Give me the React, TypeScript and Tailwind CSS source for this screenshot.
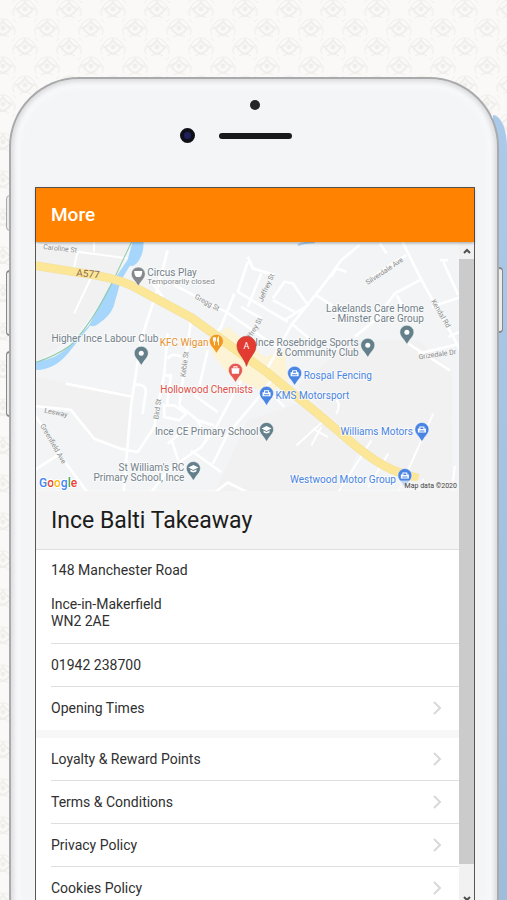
type PinProps = {
  x: number;
  y: number;
  color: string;
  icon?: "dot" | "car" | "cap" | "cup" | "fork" | "bag";
};

type MapLabel = {
  text: string;
  x: number;
  y: number;
  fill: string;
  end?: boolean;
};

const GREY = "#74818a";
const BLUE = "#4a85e3";
const TEAL = "#64808a";

const A577 =
  "M0 76 150 100Q235 112 290 135L470 232 700 398 850 520 960 614Q1040 680 1100 698L1150 714";

const links = [
  "Loyalty & Reward Points",
  "Terms & Conditions",
  "Privacy Policy",
  "Cookies Policy",
];

const labels: MapLabel[] = [
  { text: "Circus Play", x: 147, y: 276, fill: GREY },
  { text: "Higher Ince Labour Club", x: 158, y: 342, fill: GREY, end: true },
  { text: "KFC Wigan", x: 208, y: 346, fill: "#e8912d", end: true },
  { text: "Hollowood Chemists", x: 160, y: 393, fill: "#e04f48" },
  { text: "Lakelands Care Home", x: 423, y: 312, fill: GREY, end: true },
  { text: "- Minster Care Group", x: 423, y: 322, fill: GREY, end: true },
  { text: "Ince Rosebridge Sports", x: 358, y: 346, fill: GREY, end: true },
  { text: "& Community Club", x: 358, y: 356, fill: GREY, end: true },
  { text: "Rospal Fencing", x: 303, y: 379, fill: BLUE },
  { text: "KMS Motorsport", x: 275, y: 399, fill: BLUE },
  { text: "Ince CE Primary School", x: 258, y: 435, fill: GREY, end: true },
  { text: "Williams Motors", x: 412, y: 435, fill: BLUE, end: true },
  { text: "St William's RC", x: 184, y: 470, fill: GREY, end: true },
  { text: "Primary School, Ince", x: 184, y: 480, fill: GREY, end: true },
  { text: "Westwood Motor Group", x: 395, y: 482, fill: BLUE, end: true },
];

const streets = [
  { text: "Caroline St", x: 43, y: 249, angle: 6 },
  { text: "Gregg St", x: 194, y: 298, angle: 29 },
  { text: "Jeffrey St", x: 262, y: 302, angle: -66 },
  { text: "Jeffrey St", x: 247, y: 345, angle: -60 },
  { text: "Silverdale Ave", x: 367, y: 285, angle: -34 },
  { text: "Kendal Rd", x: 430, y: 301, angle: 60 },
  { text: "Grizedale Dr", x: 418, y: 359, angle: -8 },
  { text: "Keble St", x: 185, y: 377, angle: -83 },
  { text: "Bird St", x: 158, y: 419, angle: -82 },
  { text: "Lesway", x: 44, y: 412, angle: 12 },
  { text: "Greenfield Ave", x: 40, y: 425, angle: 60 },
];

// Centre of the pin head sits on x, y
const Pin = ({ x, y, color, icon = "dot" }: PinProps) => (
  <g transform={`translate(${x} ${y})`}>
    <path
      d="M0-7a7 7 0 0 1 7 7c0 3-2 5-4 7.500L0 12-3 7.500C-5 5-7 3-7 0a7 7 0 0 1 7-7Z"
      fill={color}
      stroke="#fff"
      strokeWidth=".5"
    />
    {icon === "dot" && <circle r="2.500" fill="#fff" />}
    {icon === "car" && (
      <path
        d="M-4 3v-4h1.500v-2h5v2H4v4ZM-1.500-2v1.500h3V-2ZM-2.500 1v1h5V1Z"
        fill="#fff"
        fillRule="evenodd"
      />
    )}
    {icon === "cap" && (
      <path d="M-5-1 0-3.500 5-1 0 1.500ZM-3 1l3 1.500L3 1v2L0 4-3 3Z" fill="#fff" />
    )}
    {icon === "cup" && <path d="M-4-3h8c0 3-1 6-3 6h-2c-2 0-3-3-3-6Z" fill="#fff" />}
    {icon === "fork" && (
      <path
        d="M-3-4v3q0 1 1 1v4M-1-4v3q0 1-1 1M-2-4v3M2 4v-8q-1 1-1 4h1"
        fill="none"
        stroke="#fff"
      />
    )}
    {icon === "bag" && (
      <path
        d="M-4-2h2v-2h4v2h2l-.500 5.500h-7ZM-1-2h2v-1h-2Z"
        fill="#fff"
        fillRule="evenodd"
      />
    )}
  </g>
);

const StreetMap = () => (
  <svg
    viewBox="36 242 422 248"
    className="block w-full h-auto font-['Roboto',sans-serif]"
    role="img"
    aria-label="Map of Ince-in-Makerfield"
  >
    <rect x="36" y="242" width="422" height="248" fill="#f2f4f5" />

    {/* Ground, roads and canal are drawn at three times the map's scale */}
    <g transform="translate(34 240) scale(.3333)" fill="none" strokeLinejoin="round">
      <path
        d="M0 0h290L240 130 130 280 0 370ZM0 410l290 50-10 160-80-10-90-100L0 500ZM640 540l180-60 150 150-50 126H540ZM950 300h200l100 90v366h-80l-200-150-180-170Z"
        fill="#f1f1f1"
      />
      <path d="m520 300 60-40 110 90 60-20 10 90-60 40-110-50-50-60Z" fill="#fdf3d5" />

      <g stroke="#fff" strokeWidth="8">
        <path d="M0 10 130 35 280 55M130 35 120 85M180 5v30M172 110 120 220" strokeWidth="6" />
        <path d="M400 30 375 130 320 300 290 500 268 756M355 130 385 170M95 430 290 468M300 432q35 0 35 20L325 520M0 497 110 508 180 595 260 625 310 635 360 560 390 400 400 280" />
        <path d="M400 355q15-20 40-5M385 405h25l-12 90M470 240 435 495M385 495h35l35 25-20 20-45-10V495M435 495 490 540 540 555M465 555 400 610M412 600l20 60M480 465l70 50M520 330 490 460" />
        <path d="M350 756 400 690 500 620 545 560 620 420M470 630l90 65M580 580l-45 90M580 580l85-100 45-60M490 540l30 60" />
        <path d="M420 135 575 215 740 330M640 65l-30 90 150 90M600 160 560 260 540 285M680 100 640 200M640 50 655 85 720 105M620 200l60 35" />
        <path d="m715 175 35-50 25 5 45 65-70 45M715 180l65 35M770 255 870 130 920 60 975 15M770 255 690 400M770 250l60 50" />
        <path d="M890 110l15-25 30 10M845 165l45 30 20 30M1035 10l20 30M1100 0l60 120 100 180 24 50M1115 45 1060 80 1000 120M1155 120 1080 160 1020 240 960 290M1085 165l20 35M1215 60h25M1225 65l45 100M1190 200l90-30M1240 290l45-20M1120 310l125 80M1150 340l130-30" />
        <path d="M880 530 785 615M905 480q15 10 0 40M860 560l-30 55M835 565l45 25M1010 600 910 756M1195 520 1090 756M1060 640 1000 740M700 450l50 50M1250 756l10-80M1150 756l15-40" strokeWidth="6" />
        <path d="M0 520 90 660 160 756M0 690l70-45M540 756l40-30 60 30" />
      </g>

      <path
        d="M295 6h33q0 24-6 39-8 20-17 27-8 8-18 5l-27 45-22 78q-12 30-48 53-10 8-22 4l-58 72q-24 32-50 46-28 16-60 14v-24q30-2 60-15 28-14 50-38l55-57 20-40 40-75 55-80Z"
        fill="#a6d6fb"
      />
      <path d="M292 6 240 115Q180 240 110 315 60 350 0 368" stroke="#8ecba6" strokeWidth="3" />
      <path d="M790 15q20-8 50-8" stroke="#a8cdf0" strokeWidth="6" />

      <path d={A577} stroke="#f4e2a0" strokeWidth="27" />
      <path d={A577} stroke="#fce698" strokeWidth="22" />
    </g>
    <text x="76" y="276" fontSize="10" fill="#8b6a4f" transform="rotate(5 76 276)">
      A577
    </text>

    <g fontSize="7" fill="#8b8b8b">
      {streets.map((street) => (
        <text
          key={`${street.text}-${street.y}`}
          x={street.x}
          y={street.y}
          transform={`rotate(${street.angle} ${street.x} ${street.y})`}
        >
          {street.text}
        </text>
      ))}
    </g>

    <g fontSize="10" stroke="#fff" strokeWidth="2" paintOrder="stroke" strokeOpacity=".6">
      {labels.map((label) => (
        <text
          key={label.text}
          x={label.x}
          y={label.y}
          fill={label.fill}
          textAnchor={label.end ? "end" : "start"}
        >
          {label.text}
        </text>
      ))}
      <text x="147" y="284" fontSize="8" fill="#85898c">
        Temporarily closed
      </text>
    </g>

    <Pin x={138} y={274} color="#85898e" icon="cup" />
    <Pin x={141} y={353} color={TEAL} />
    <Pin x={216} y={341} color="#f29a1f" icon="fork" />
    <Pin x={235} y={370} color="#e65850" icon="bag" />
    <Pin x={406} y={332} color={TEAL} />
    <Pin x={367} y={345} color={TEAL} />
    <Pin x={294} y={373} color={BLUE} icon="car" />
    <Pin x={266} y={393} color={BLUE} icon="car" />
    <Pin x={266} y={429} color={TEAL} icon="cap" />
    <Pin x={421} y={429} color={BLUE} icon="car" />
    <Pin x={193} y={468} color={TEAL} icon="cap" />
    <Pin x={404} y={475} color={BLUE} icon="car" />

    <path
      d="M246 336c5 0 9.500 4 9.500 9.500 0 8-7 11-9.500 20.500-2.500-9.500-9.500-12.500-9.500-20.500 0-5.500 4.500-9.500 9.500-9.500Z"
      fill="#e33b32"
      stroke="#b9362c"
      strokeWidth=".6"
    />
    <text x="246" y="349" fontSize="9" textAnchor="middle" fill="#fff">
      A
    </text>

    <text x="39" y="486" fontSize="12" fontWeight="500" stroke="#fff" strokeWidth="2" paintOrder="stroke">
      <tspan fill="#4285f4">G</tspan>
      <tspan fill="#ea4335">o</tspan>
      <tspan fill="#fbbc05">o</tspan>
      <tspan fill="#4285f4">g</tspan>
      <tspan fill="#34a853">l</tspan>
      <tspan fill="#ea4335">e</tspan>
    </text>
    <rect x="398" y="480" width="60" height="10" fill="#f5f5f5" fillOpacity=".7" />
    <text x="456" y="487" fontSize="7" fill="#444" textAnchor="end">
      Map data ©2020
    </text>
  </svg>
);

const Wallpaper = () => (
  <svg className="absolute inset-0 size-full" aria-hidden="true">
    <defs>
      <pattern id="damask" width="44" height="38" patternUnits="userSpaceOnUse">
        <rect width="44" height="38" fill="#faf9f7" />
        <g id="motif" fill="none" stroke="#f0eeeb">
          <circle cx="25" cy="9" r="2" fill="#f0eeeb" />
          <path d="M17 9q5-2 8-7 3 5 8 7-3 5-8 7-5-2-8-7Z" strokeWidth="2" />
          <path d="M14 16q-3-6 1-9 1 3-1 4M36 16q3-6-1-9-1 3 1 4M15 7q4-7 10-7t10 7M19 18q6-4 12 0M12 3l3-3M35 0l3 3" />
        </g>
        <use href="#motif" x="-22" y="19" />
        <use href="#motif" x="22" y="19" />
        <use href="#motif" y="38" />
      </pattern>
    </defs>
    <rect width="100%" height="100%" fill="url(#damask)" />
  </svg>
);

const Chevron = () => (
  <svg viewBox="0 0 10 14" className="h-[14px] w-[10px]" aria-hidden="true">
    <path d="m2 1 6 6-6 6" fill="none" stroke="#d8d8d8" strokeWidth="2" />
  </svg>
);

const Arrow = ({ down = false }: { down?: boolean }) => (
  <button
    aria-label={down ? "Scroll down" : "Scroll up"}
    className="flex h-[17px] w-full shrink-0 items-center justify-center bg-[#f1f1f1]"
  >
    <svg viewBox="0 0 8 6" className={down ? "h-[6px] w-[8px] rotate-180" : "h-[6px] w-[8px]"}>
      <path d="m1 5 3-3 3 3" fill="none" stroke="#505050" strokeWidth="2" />
    </svg>
  </button>
);

const App = () => {
  return (
    <div className="relative h-screen overflow-hidden bg-[#faf9f7] pl-[9px] pr-2 pt-[77px] font-['Roboto',sans-serif] text-[#303030]">
      <Wallpaper />
      <div className="absolute right-0 top-[115px] bottom-0 w-[14px] rounded-tr-[14px_32px] bg-linear-to-b from-[#abc9e9] to-[#9dbddb]" />

      {/* Side buttons of the handset */}
      <div className="absolute left-[6px] top-[195px] h-[36px] w-2 rounded-l border border-[#aaa] bg-[#ececec]" />
      <div className="absolute left-[6px] top-[270px] h-[66px] w-2 rounded-l border border-y-2 border-[#888] bg-[#ececec]" />
      <div className="absolute left-[6px] top-[351px] h-[66px] w-2 rounded-l border border-y-2 border-[#888] bg-[#ececec]" />
      <div className="absolute right-[4px] top-[267px] h-[66px] w-2 rounded-r border border-y-2 border-[#888] bg-[#ececec]" />

      <div className="relative rounded-t-[70px] border-2 border-b-0 border-[#a9aaac] bg-[#f3f5f7] pl-6 pr-[22px] shadow-[inset_0_0_4px_3px_#dcdcdf,inset_0_0_6px_8px_#f9fafb]">
        {/* Camera, sensor and speaker */}
        <div className="flex h-[108px] flex-col items-center pt-[21px]">
          <div className="size-[10px] rounded-full bg-[#242527]" />
          <div className="mt-[18px] grid w-full grid-cols-[1fr_73px_1fr] items-center">
            <div className="flex justify-end pr-6">
              <div className="size-[15px] rounded-full border-4 border-[#101019] bg-[#20205f]" />
            </div>
            <div className="h-[6px] rounded-full bg-[#18191a]" />
          </div>
        </div>

        <div className="border border-b-0 border-[#5c5651] bg-white">
          <header className="relative flex h-[54px] items-center bg-[#ff8300] px-[15px] shadow-[0_1px_3px_rgba(0,0,0,0.35)]">
            <h1 className="text-[19px] font-medium text-white">More</h1>
          </header>

          <div className="flex">
            <main className="min-w-0 flex-1">
              <StreetMap />
              <h2 className="flex h-[59px] items-center border-b border-[#dedede] bg-[#f4f4f4] px-[15px] pt-1 text-[23px] text-[#1c1c1c]">
                Ince Balti Takeaway
              </h2>
              <div className="pl-[15px] text-sm">
                <address className="border-b border-[#dedede] pb-[13px] pt-[12px] not-italic leading-[17px]">
                  148 Manchester Road
                  <br />
                  <br />
                  Ince-in-Makerfield
                  <br />
                  WN2 2AE
                </address>
                <a href="tel:01942238700" className="flex h-[43px] items-center border-b border-[#dedede]">
                  01942 238700
                </a>
                <a href="#opening-times" className="flex h-[43px] items-center justify-between pr-[17px]">
                  Opening Times
                  <Chevron />
                </a>
              </div>
              <div className="h-2 bg-[#f7f7f7]" />
              <nav className="pl-[15px] text-sm">
                {links.map((link) => (
                  <a
                    key={link}
                    href="#more"
                    className="flex h-[43px] items-center justify-between border-b border-[#dedede] pr-[17px]"
                  >
                    {link}
                    <Chevron />
                  </a>
                ))}
              </nav>
            </main>

            <div className="flex w-[15px] shrink-0 flex-col bg-[#f1f1f1]">
              <Arrow />
              <div className="h-[605px] bg-[#cbcbcb]" />
              <div className="h-[26px]" />
              <Arrow down />
            </div>
          </div>
        </div>
      </div>
    </div>
  );
};

export default App;
